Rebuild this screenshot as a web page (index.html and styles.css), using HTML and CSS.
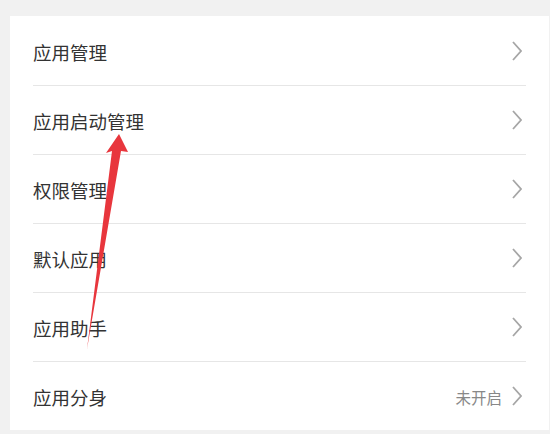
FILE: index.html
```html
<!DOCTYPE html>
<html lang="zh-CN">
<head>
    <meta charset="UTF-8">
    <meta name="viewport" content="width=device-width, initial-scale=1.0">
    <title>应用</title>
    <link rel="stylesheet" href="styles.css">
</head>
<body>
    <div class="card">
        <div class="row"><span class="label">应用管理</span><span class="chevron"></span></div>
        <div class="row"><span class="label">应用启动管理</span><span class="chevron"></span></div>
        <div class="row"><span class="label">权限管理</span><span class="chevron"></span></div>
        <div class="row"><span class="label">默认应用</span><span class="chevron"></span></div>
        <div class="row"><span class="label">应用助手</span><span class="chevron"></span></div>
        <div class="row"><span class="label">应用分身</span><span class="value">未开启</span><span class="chevron"></span></div>
    </div>

    <svg class="arrow" width="550" height="434" viewBox="0 0 550 434">
        <polygon points="119,134 128,152 121,151 87,349 112,151 106,153" fill="#e8363d"/>
    </svg>
</body>
</html>
```

FILE: styles.css
```css
body {
    font-family: "Noto Sans CJK SC", "Noto Sans", sans-serif;
    margin: 0;
    padding: 16px 1px 0 10px;
    height: 434px;
    box-sizing: border-box;
    background-color: #f1f1f1;
    color: #333;
    position: relative;
    overflow: hidden;
}
.card {
    background-color: white;
    padding: 1px 23px 0;
}
.row {
    display: flex;
    align-items: center;
    height: 68px;
    padding-right: 4px;
    border-bottom: 1px solid #e6e6e6;
}
.row:last-child {
    border-bottom: none;
}
.label {
    flex: 1;
    font-size: 18.5px;
    line-height: 1;
    padding-top: 2px;
}
.value {
    font-size: 15.5px;
    color: #888;
    margin-right: 10px;
    padding-top: 2px;
}
.chevron {
    width: 10px;
    height: 20px;
    background: url("data:image/svg+xml,%3Csvg xmlns='http://www.w3.org/2000/svg' width='10' height='20' viewBox='0 0 10 20'%3E%3Cpolyline points='1,1 9,10 1,19' fill='none' stroke='%23a6a6a6' stroke-width='1.8'/%3E%3C/svg%3E") no-repeat;
}
.arrow {
    position: absolute;
    left: 0;
    top: 0;
}
```
